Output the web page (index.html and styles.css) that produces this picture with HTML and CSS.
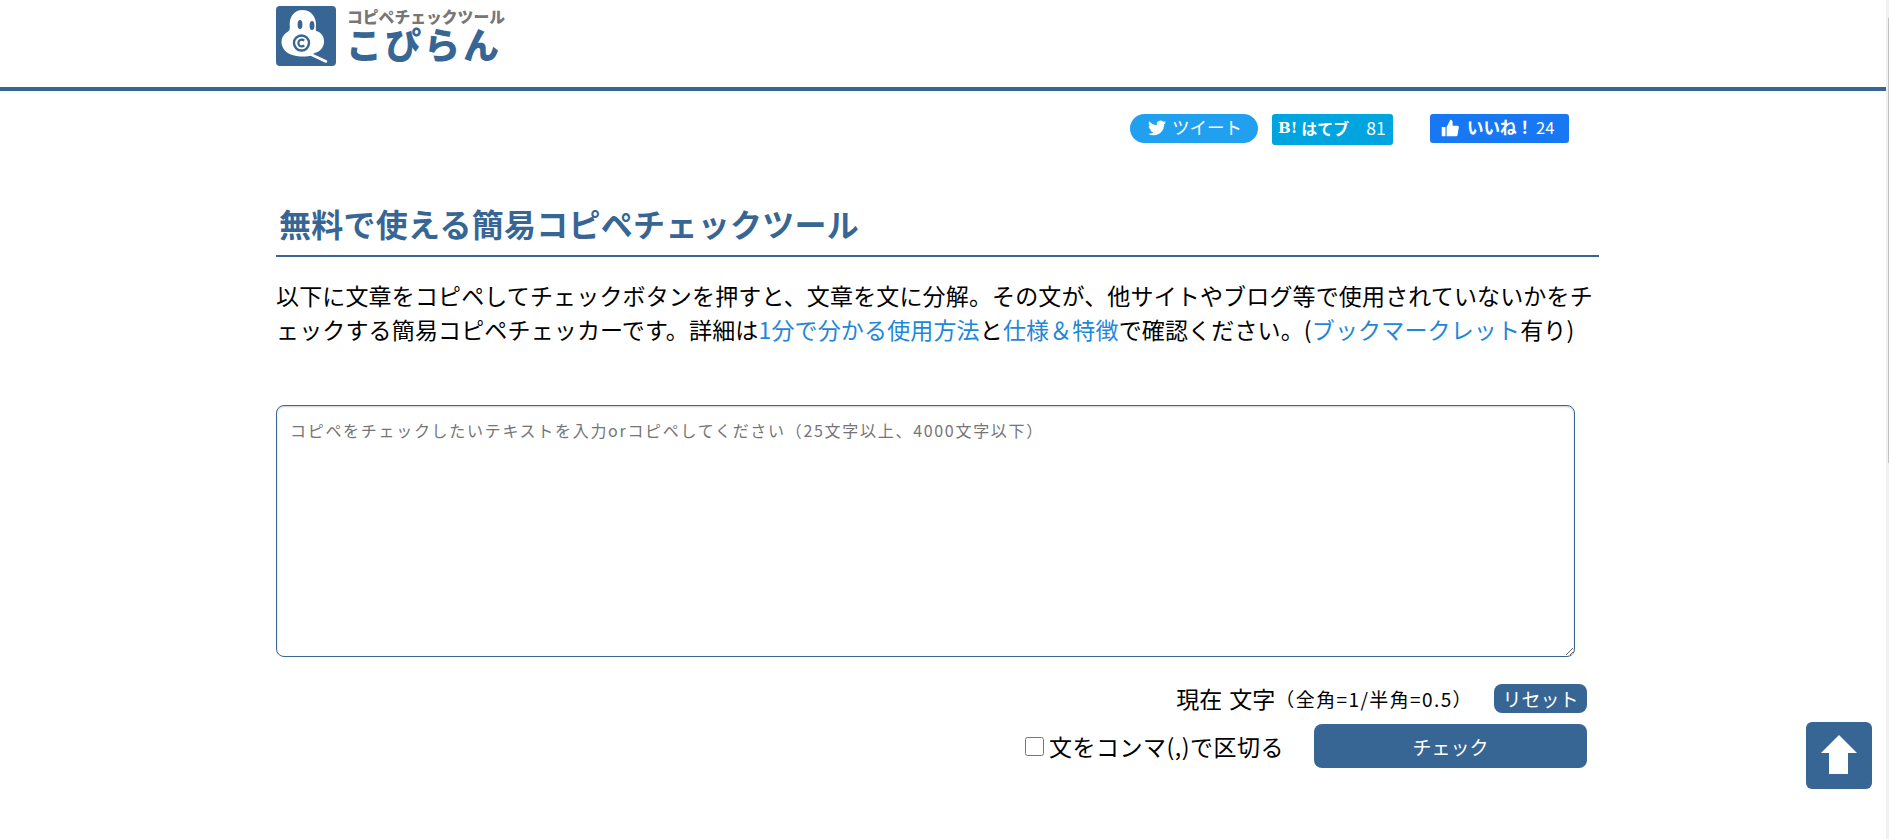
FILE: index.html
```html
<!DOCTYPE html>
<html lang="ja">
<head>
<meta charset="utf-8">
<title>こぴらん</title>
<link rel="stylesheet" href="styles.css">
</head>
<body>
<div class="page">
  <header class="site-header">
    <a class="logo" href="#">
      <svg class="logo-mark" viewBox="0 0 60 60" width="60" height="60" aria-hidden="true">
        <rect x="0" y="0" width="60" height="60" rx="4" fill="#386694"/>
        <path d="M26.500 4C34.500 4 39.500 10 40 17.500C40.200 21 39.500 23 40 25C45.500 26 48.500 31 48 36.500C47.500 42 43.500 46 38.500 47C36 49.500 33 50.500 30 50.500C20 51 8.500 48.500 6 39.500C4.500 33 7 28.500 11.500 26C13.500 25 14 23 13.800 20C13 11 18 4 26.500 4Z" fill="#fff"/>
        <path d="M34 48L50 55.500" stroke="#fff" stroke-width="2.600" stroke-linecap="round" fill="none"/>
        <ellipse cx="24" cy="18.500" rx="2.400" ry="4.600" fill="#386694"/>
        <ellipse cx="36" cy="19.500" rx="2.400" ry="4.600" fill="#386694"/>
        <circle cx="25.500" cy="37" r="7.500" fill="none" stroke="#386694" stroke-width="2.400"/>
        <path d="M28.200 34.600A3.400 3.400 0 1 0 28.200 39.400" fill="none" stroke="#386694" stroke-width="2.200"/>
      </svg>
      <span class="logo-text">
        <span class="logo-sub">コピペチェックツール</span>
        <span class="logo-main">こぴらん</span>
      </span>
    </a>
  </header>

  <main class="main">
    <div class="share">
      <a class="share-btn tweet" href="#">
        <svg class="bird" viewBox="0 0 24 24" width="18" height="18" aria-hidden="true"><path fill="#fff" d="M23.950 4.570a10 10 0 0 1-2.820.770 4.960 4.960 0 0 0 2.160-2.720 9.900 9.900 0 0 1-3.120 1.180 4.920 4.920 0 0 0-8.380 4.480C7.690 8.100 4.070 6.130 1.640 3.160a4.820 4.820 0 0 0-.670 2.480c0 1.710.870 3.210 2.190 4.100a4.900 4.900 0 0 1-2.230-.620v.060a4.920 4.920 0 0 0 3.950 4.830 5 5 0 0 1-2.210.080 4.940 4.940 0 0 0 4.600 3.420A9.870 9.870 0 0 1 0 19.540a14 14 0 0 0 7.560 2.210c9.050 0 14-7.500 14-13.980 0-.210 0-.420-.020-.630a9.940 9.940 0 0 0 2.460-2.550z"/></svg>
        <span class="tweet-label">ツイート</span>
      </a>
      <a class="share-btn hatena" href="#">
        <b class="hatena-b">B!</b><b class="hatena-label">はてブ</b><span class="hatena-count">81</span>
      </a>
      <a class="share-btn like" href="#">
        <svg class="thumb" viewBox="0 0 24 24" width="18" height="18" aria-hidden="true"><path fill="#fff" d="M1 10.500h5V23H1zM7.500 23V10.500L12.500 1c1.800 0 3 1.300 3 3.200V9H22a1.800 1.800 0 0 1 1.700 2.200L22 21.500A1.900 1.900 0 0 1 20 23z"/></svg>
        <b class="like-label">いいね！</b><span class="like-count">24</span>
      </a>
    </div>

    <h1 class="title">無料で使える簡易コピペチェックツール</h1>

    <p class="intro"><span class="intro-line">以下に文章をコピペしてチェックボタンを押すと、文章を文に分解。その文が、他サイトやブログ等で使用されていないかをチ</span><span class="intro-line">ェックする簡易コピペチェッカーです。詳細は<a href="#">1分で分かる使用方法</a>と<a href="#">仕様＆特徴</a>で確認ください。(<a href="#">ブックマークレット</a>有り)</span></p>

    <textarea class="input" placeholder="コピペをチェックしたいテキストを入力orコピペしてください（25文字以上、4000文字以下）"></textarea>

    <div class="row count-row">
      <span class="count">現在 文字</span>
      <span class="count-note">（全角=1/半角=0.5）</span>
      <button class="btn reset" type="button">リセット</button>
    </div>
    <div class="row check-row">
      <label class="comma"><input class="comma-box" type="checkbox">文をコンマ(,)で区切る</label>
      <button class="btn check" type="button">チェック</button>
    </div>
  </main>
</div>

<a class="to-top" href="#" aria-label="ページトップへ">
  <svg viewBox="0 0 66 67" width="66" height="67" aria-hidden="true"><path fill="#fff" d="M33 13L51 31H42V52H23V31H15Z"/></svg>
</a>
<div class="scrollbar"><div class="scrollbar-thumb"></div></div>
</body>
</html>
```

FILE: styles.css
```css
* { box-sizing: border-box; }

html, body {
  margin: 0;
  padding: 0;
  height: 100%;
  overflow: hidden;
  background: #fff;
}

body {
  font-family: "Noto Sans CJK JP", "Noto Sans", sans-serif;
  color: #000;
}

a { text-decoration: none; }

.page { margin-right: 3px; }

.site-header {
  height: 91px;
  border-bottom: 4px solid #386694;
  padding: 6px 0 0 276px;
}

.logo {
  display: inline-flex;
  gap: 12px;
}

.logo-mark { display: block; }

.logo-text {
  display: flex;
  flex-direction: column;
  color: #386694;
  padding-top: 2px;
}

.logo-sub {
  color: #777;
  font-size: 15.800px;
  line-height: 17px;
  font-weight: 900;
  margin-left: -1px;
}

.logo-main {
  font-size: 36px;
  font-weight: 900;
  line-height: 38px;
  margin: -1px 0 0 -2px;
  letter-spacing: 3px;
}

.main {
  width: 1323px;
  margin-left: 276px;
}

.share {
  display: flex;
  justify-content: flex-end;
  align-items: flex-start;
  padding: 23px 30px 0 0;
  height: 54px;
  color: #fff;
  font-size: 16.500px;
}

.share-btn {
  display: flex;
  align-items: center;
  height: 29px;
  padding-bottom: 3px;
  color: #fff;
  line-height: 1;
}

.tweet {
  width: 128px;
  border-radius: 15px;
  background: #22a0f0;
  padding-left: 18px;
  gap: 6px;
}

.tweet-label { font-size: 17.500px; }

.bird { margin-top: 2px; }

.hatena {
  width: 121px;
  height: 31px;
  margin-left: 14px;
  margin-right: 37px;
  border-radius: 3px;
  background: #00a4de;
  padding-left: 6px;
}

.hatena-b {
  font-family: "DejaVu Serif", serif;
  font-size: 15px;
}

.hatena-label {
  margin-left: 4px;
  font-size: 16px;
}

.hatena-count {
  margin-left: 17px;
  font-size: 17.500px;
}

.like {
  width: 139px;
  border-radius: 3px;
  background: #1877f2;
  padding-left: 11px;
}

.thumb { margin-top: 2px; }

.like-label { margin-left: 8px; }

.like-count {
  font-size: 16.500px;
  margin-left: 3px;
}

.title {
  margin: 0;
  height: 112px;
  padding: 55px 0 0 3px;
  border-bottom: 2px solid #386694;
  color: #386694;
  font-size: 32px;
  font-weight: 700;
  line-height: 46px;
  letter-spacing: 0.280px;
}

.intro {
  margin: 21px 0 59px;
  font-size: 23px;
  line-height: 34px;
  letter-spacing: 0.150px;
}

.intro-line {
  display: block;
  white-space: nowrap;
}

.intro a { color: #1f87d8; }

.input {
  display: block;
  width: 1299px;
  height: 252px;
  padding: 13px;
  border: 1px solid #386694;
  border-radius: 8px;
  box-shadow: inset 0 1px 2px rgba(0, 0, 0, 0.2);
  font-family: "Liberation Sans Narrow", "Noto Sans CJK JP", sans-serif;
  font-size: 16px;
  letter-spacing: 1.700px;
  line-height: 22px;
  outline: none;
}

.input::placeholder { color: #757575; }

.row {
  display: flex;
  justify-content: flex-end;
  align-items: center;
  padding-right: 12px;
}

.count-row {
  margin-top: 27px;
  height: 29px;
}

.count {
  font-size: 23px;
  line-height: 29px;
  word-spacing: 2px;
}

.count-note {
  font-size: 19px;
  line-height: 29px;
  letter-spacing: 1.400px;
  margin-right: 21px;
}

.btn {
  border: 0;
  background: #386694;
  color: #fff;
  font-family: inherit;
  font-size: 19px;
  padding: 0;
  border-radius: 8px;
  line-height: 1;
}

.reset {
  width: 93px;
  height: 29px;
}

.check-row {
  margin-top: 11px;
  height: 44px;
}

.check {
  width: 273px;
  height: 44px;
}

.comma {
  display: flex;
  align-items: center;
  font-size: 23px;
  line-height: 30px;
  letter-spacing: 0.500px;
  margin-right: 30px;
}

.comma-box {
  width: 19px;
  height: 19px;
  margin: 0 5px 0 0;
}

.to-top {
  position: fixed;
  left: 1806px;
  top: 722px;
  width: 66px;
  height: 67px;
  border-radius: 6px;
  background: #386694;
}

.to-top svg { display: block; }

.scrollbar {
  position: fixed;
  top: 0;
  right: 0;
  bottom: 0;
  width: 3px;
  background: #f1f1f1;
}

.scrollbar-thumb {
  margin: 18px 0 0 2px;
  width: 1px;
  height: 445px;
  background: #c1c1c1;
}
```
